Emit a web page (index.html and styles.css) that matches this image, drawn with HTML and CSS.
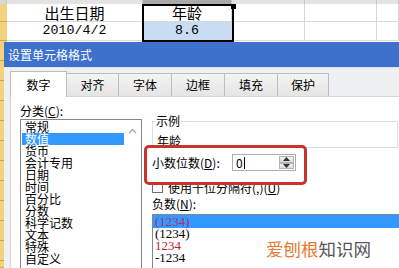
FILE: index.html
```html
<!DOCTYPE html>
<html lang="zh-CN">
<head>
<meta charset="UTF-8" />
<title>设置单元格格式</title>
<link rel="stylesheet" href="styles.css">
</head>
<body>

<div class="sheet">
  <div class="hd corner"></div>
  <div class="hd"></div>
  <div class="hd hd-sel"></div>
  <div class="hd"></div>
  <div class="hd"></div>
  <div class="hd"></div>

  <div class="rh"></div>
  <div class="cell cjk">出生日期</div>
  <div class="cell cjk">年龄</div>
  <div class="cell"></div>
  <div class="cell"></div>
  <div class="cell"></div>

  <div class="rh"></div>
  <div class="cell num">2010/4/2</div>
  <div class="cell num sel-fill">8.6</div>
  <div class="cell"></div>
  <div class="cell"></div>
  <div class="cell"></div>

  <div class="rh rh-rest"></div>
  <div class="rest"></div>
  <div class="rest"></div>
  <div class="rest"></div>
  <div class="rest"></div>
  <div class="rest"></div>
</div>

<div class="range-outline"><span class="handle"></span></div>

<div class="dialog">
  <div class="titlebar">设置单元格格式</div>
  <div class="dlg-body">
    <div class="tabs">
      <div class="tab active">数字</div>
      <div class="tab w53">对齐</div>
      <div class="tab">字体</div>
      <div class="tab">边框</div>
      <div class="tab">填充</div>
      <div class="tab w52">保护</div>
    </div>

    <div class="panel">
      <div class="col-left">
        <div class="lbl">分类(<u>C</u>):</div>
        <div class="listbox">
          <div class="items">
            <div class="item">常规</div>
            <div class="item selected">数值</div>
            <div class="item">货币</div>
            <div class="item">会计专用</div>
            <div class="item">日期</div>
            <div class="item">时间</div>
            <div class="item">百分比</div>
            <div class="item">分数</div>
            <div class="item">科学记数</div>
            <div class="item">文本</div>
            <div class="item">特殊</div>
            <div class="item">自定义</div>
          </div>
          <div class="vscroll">
            <svg width="9" height="6" viewBox="0 0 9 6"><path d="M1 5 L4.5 1.5 L8 5" fill="none" stroke="#a8a8a8" stroke-width="1.4"/></svg>
          </div>
        </div>
      </div>

      <div class="col-right">
        <fieldset class="sample">
          <legend>示例</legend>
          <div class="sample-val">年龄</div>
        </fieldset>

        <div class="dec-row">
          <span class="dec-lbl">小数位数(<u>D</u>):</span>
          <div class="spin">
            <span class="spin-val">0<i class="caret"></i></span>
            <div class="spin-btns">
              <div class="sb"><svg width="7" height="4" viewBox="0 0 7 4"><path d="M0 4 L3.5 0 L7 4Z" fill="#333"/></svg></div>
              <div class="sb"><svg width="7" height="4" viewBox="0 0 7 4"><path d="M0 0 L3.5 4 L7 0Z" fill="#333"/></svg></div>
            </div>
          </div>
        </div>

        <div class="chk-row">
          <span class="chk"></span>
          <span>使用千位分隔符(,)(<u>U</u>)</span>
        </div>

        <div class="lbl neg-lbl">负数(<u>N</u>):</div>
        <div class="neglist">
          <div class="neg selected">(1234)</div>
          <div class="neg">(1234)</div>
          <div class="neg red">1234</div>
          <div class="neg">-1234</div>
        </div>
      </div>
    </div>
  </div>
</div>

<div class="mark"></div>
<div class="watermark"><span class="wm-a">爱刨根</span><span class="wm-b">知识网</span></div>

</body>
</html>
```

FILE: styles.css
```css
* {
box-sizing: border-box;
}

body {
margin: 0;
width: 399px;
height: 268px;
overflow: hidden;
position: relative;
background: #fff;
font-family: "Noto Sans CJK SC", sans-serif;
font-size: 12px;
color: #000;
}

/* spreadsheet behind the dialog */
.sheet {
display: grid;
grid-template-columns: 7px 136px 89px 73px 72px 1fr;
grid-template-rows: 4px 18px 19px 1fr;
height: 268px;
}

.hd {
background: #e3e3e3;
border-right: 1px solid #c6c6c6;
}

.hd-sel {
background: #a9a9a9;
}

.corner {
background: #d8d8d8;
}

.rh {
background: #f3d27e;
border-bottom: 1px solid #d3a64a;
}

.rh-rest {
background: repeating-linear-gradient(to bottom, #f3d27e 0, #f3d27e 19px, #d3a64a 19px, #d3a64a 20px);
}

.cell {
border-right: 1px solid #d9d9d9;
border-bottom: 1px solid #d9d9d9;
text-align: center;
white-space: nowrap;
overflow: hidden;
}

.cjk {
font-size: 15px;
line-height: 17px;
}

.num {
font-family: "Liberation Mono", monospace;
font-size: 13.3px;
line-height: 18px;
}

.sel-fill {
background: #c9dcf3;
}

.rest {
background: #fff;
}

.range-outline {
position: absolute;
left: 142px;
top: 4px;
width: 92px;
height: 38px;
border: 2px solid #000;
}

.handle {
position: absolute;
right: -4px;
top: -2px;
width: 5px;
height: 5px;
background: #000;
}

/* format cells dialog */
.dialog {
position: absolute;
left: 4px;
top: 42px;
width: 430px;
height: 240px;
background: #eef0f3;
}

.titlebar {
height: 25px;
background: #3d71cb;
color: #fff;
font-size: 12px;
line-height: 25px;
padding-left: 4px;
}

.dlg-body {
padding: 2px 0 0 6px;
border-top: 1px solid #dce3ec;
}

.tabs {
display: flex;
align-items: flex-end;
height: 26px;
}

.tab {
width: 54px;
height: 23px;
margin-left: -1px;
border: 1px solid #bdbdbd;
border-bottom: none;
background: linear-gradient(#f4f4f4, #e4e4e4);
text-align: center;
line-height: 22px;
font-size: 12px;
}

.tab.w53 {
width: 53px;
}

.tab.w52 {
width: 52px;
}

.tab.active {
width: 57px;
height: 26px;
margin-left: 0;
margin-bottom: -1px;
background: #fff;
line-height: 26px;
position: relative;
z-index: 1;
}

.panel {
display: flex;
gap: 10px;
height: 200px;
background: #fff;
border: 1px solid #d5d5d5;
padding: 7px 0 0 9px;
}

.lbl {
line-height: 14px;
height: 14px;
white-space: nowrap;
}

.col-left .lbl {
margin-bottom: 1px;
}

.listbox {
display: flex;
width: 122px;
height: 160px;
border: 1px solid #828790;
}

.items {
flex: 1;
padding-top: 1px;
}

.item {
line-height: 12px;
height: 12px;
padding-left: 3px;
margin-left: 1px;
white-space: nowrap;
}

.item.selected {
background: #3399ff;
color: #fff;
}

.vscroll {
width: 17px;
display: flex;
justify-content: center;
padding-top: 8px;
}

.col-right {
padding-top: 11px;
}

.sample {
width: 246px;
margin: 0;
padding: 0 0 0 4px;
border: 1px solid #d5dfe5;
}

.sample legend {
padding: 0 1px;
margin-left: -2px;
line-height: 12px;
font-size: 12px;
}

.sample-val {
padding-top: 7px;
line-height: 13px;
}

.dec-row {
display: flex;
align-items: center;
margin-top: 6px;
height: 17px;
}

.dec-lbl {
width: 80px;
white-space: nowrap;
}

.spin {
display: flex;
width: 64px;
height: 17px;
border: 1px solid #abadb3;
}

.spin-val {
flex: 1;
padding-left: 3px;
line-height: 15px;
display: flex;
align-items: center;
}

.caret {
display: inline-block;
width: 1px;
height: 12px;
background: #000;
margin-left: 1px;
}

.spin-btns {
width: 15px;
display: flex;
flex-direction: column;
margin: 1px;
}

.sb {
flex: 1;
display: flex;
align-items: center;
justify-content: center;
background: linear-gradient(#f2f2f2, #dcdcdc);
border: 1px solid #b5b5b5;
}

.chk-row {
display: flex;
align-items: center;
gap: 5px;
margin-top: 9px;
height: 14px;
white-space: nowrap;
}

.chk {
width: 11px;
height: 11px;
border: 1px solid #707070;
background: #fff;
}

.neg-lbl {
margin-top: 3px;
}

.neglist {
width: 248px;
height: 60px;
margin-top: 3px;
border: 1px solid #828790;
}

.neg {
font-family: "Liberation Serif", serif;
font-size: 13px;
line-height: 12px;
height: 12px;
padding-left: 2px;
}

.neg.selected {
background: #3399ff;
color: #b0306e;
height: 13px;
line-height: 13px;
}

.neg.red {
color: #c0202a;
}

/* annotation overlays */
.mark {
position: absolute;
left: 144px;
top: 145px;
width: 163px;
height: 40px;
border: 3px solid #c8342c;
border-radius: 5px;
}

.watermark {
position: absolute;
left: 266px;
top: 238px;
font-size: 17.5px;
line-height: 22px;
white-space: nowrap;
}

.wm-a {
color: #e47a30;
}

.wm-b {
color: #555;
}
```
